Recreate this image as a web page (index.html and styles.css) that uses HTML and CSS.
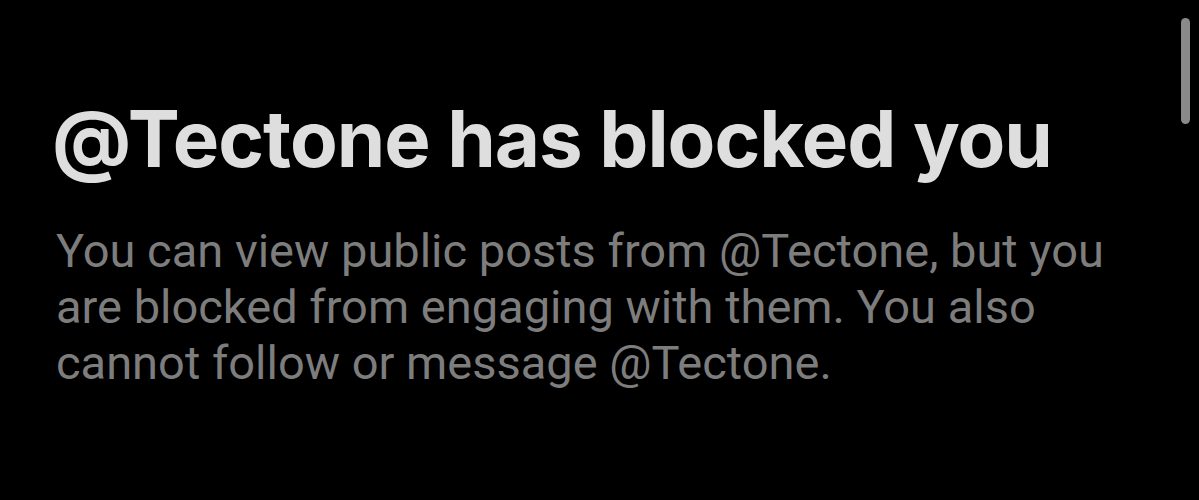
FILE: index.html
```html
<!DOCTYPE html>
<html lang="en">
<head>
<meta charset="utf-8">
<title>Blocked</title>
<link rel="stylesheet" href="styles.css">
</head>
<body>
<main class="page">
  <section class="notice">
    <h1 class="notice-title">@Tectone has blocked you</h1>
    <p class="notice-text">You can view public posts from @Tectone, but you are blocked from engaging with them. You also cannot follow or message @Tectone.</p>
  </section>
  <div class="scrollbar"></div>
</main>
</body>
</html>
```

FILE: styles.css
```css
html, body {
  margin: 0;
  padding: 0;
  background: #000;
}
.page {
  position: relative;
  width: 1199px;
  height: 500px;
  overflow: hidden;
  background: #000;
}
.notice {
  padding: 100px 0 0 52px;
  width: 1090px;
}
.notice-title {
  margin: 0;
  font-family: Inter, "Liberation Sans", sans-serif;
  font-weight: 700;
  font-size: 78px;
  line-height: 78px;
  color: #dedede;
  letter-spacing: -1px;
  white-space: nowrap;
}
.notice-text {
  margin: 45px 0 0 4px;
  font-family: Roboto, "Liberation Sans", sans-serif;
  font-weight: 400;
  font-size: 47px;
  line-height: 56px;
  color: #7d7d7d;
}
.scrollbar {
  position: absolute;
  top: 18px;
  left: 1181px;
  width: 9px;
  height: 106px;
  border-radius: 5px;
  background: #8a8a8a;
}
```
